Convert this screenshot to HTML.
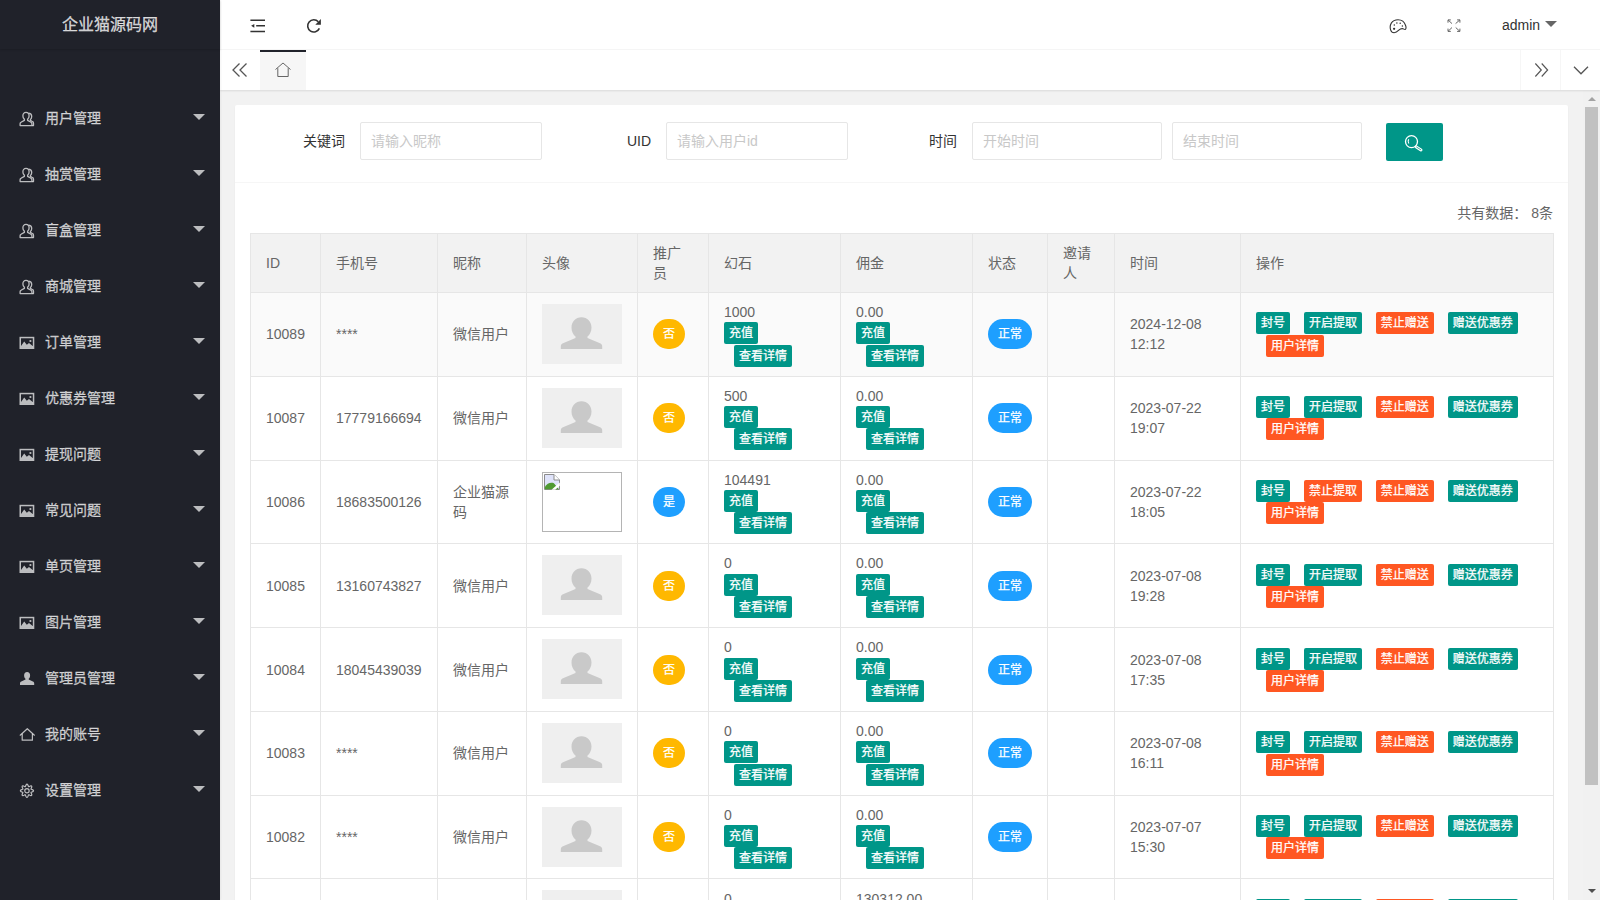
<!DOCTYPE html>
<html lang="zh-CN">
<head>
<meta charset="utf-8">
<title>企业猫源码网</title>
<style>
*{box-sizing:border-box;margin:0;padding:0}
html,body{width:1600px;height:900px;overflow:hidden}
body{font:14px/24px "Liberation Sans","Noto Sans CJK SC",sans-serif;color:#666;background:#f2f2f2;position:relative}
a{color:inherit;text-decoration:none}
ul{list-style:none}
.side{position:absolute;left:0;top:0;width:220px;height:900px;background:#20222A;color:rgba(255,255,255,.7);z-index:5;box-shadow:1px 0 2px 0 rgba(0,0,0,.05)}
.logo{position:absolute;left:0;top:0;width:220px;height:49px;line-height:50px;text-align:center;font-size:16px;color:rgba(255,255,255,.8);box-shadow:0 1px 2px 0 rgba(0,0,0,.15);-webkit-text-stroke:.25px rgba(255,255,255,.8)}
.nav{position:absolute;left:0;top:90px;width:220px}
.nav li{position:relative;height:56px;line-height:56px;padding-left:45px;font-size:14px;-webkit-text-stroke:.3px rgba(255,255,255,.7)}
.nav li .mi{position:absolute;left:19px;top:21px}
.nav li .more{position:absolute;right:15px;top:24px;width:0;height:0;border:6px solid transparent;border-top-color:rgba(255,255,255,.7);border-bottom-width:0}
.header{position:absolute;left:220px;top:0;width:1380px;height:50px;background:#fff;border-bottom:1px solid #f6f6f6;color:#333}
.header .ic{position:absolute}
.header .admin{position:absolute;left:1282px;top:13px;line-height:24px;font-size:14px;color:#333}
.header .tri{position:absolute;left:1325px;top:21px;width:0;height:0;border:6px solid transparent;border-top-color:#666;border-bottom-width:0}
.tabs{position:absolute;left:220px;top:50px;width:1380px;height:40px;background:#fff;box-shadow:0 1px 2px 0 rgba(0,0,0,.1);z-index:3}
.tabs .ctl{position:absolute;top:0;width:40px;height:40px;border-left:1px solid #f6f6f6}
.tabs .hometab{position:absolute;left:40px;top:0;width:46px;height:40px;background:#f6f6f6}
.tabs .hometab:before{content:"";position:absolute;left:0;top:0;width:100%;height:2px;background:#20222A}
.tabs svg{position:absolute}
.body{position:absolute;left:220px;top:90px;width:1380px;height:810px;background:#f2f2f2;overflow:hidden}
.sb{position:absolute;right:0;top:0;width:17px;height:810px;background:#f1f1f1}
.sb .thumb{position:absolute;left:2px;top:17px;width:13px;height:678px;background:#c1c1c1}
.sb .up{position:absolute;left:5px;top:7px;width:0;height:0;border:4px solid transparent;border-bottom:4px solid #a3a3a3;border-top-width:0}
.sb .dn{position:absolute;left:5px;top:799px;width:0;height:0;border:4px solid transparent;border-top:4px solid #505050;border-bottom-width:0}
.card{position:absolute;left:15px;top:15px;width:1333px;height:1000px;background:#fff;border-radius:2px;box-shadow:0 1px 2px 0 rgba(0,0,0,.05)}
.lbl{position:absolute;top:32px;height:38px;line-height:38px;width:110px;padding:0 15px;text-align:right;color:#333;left:0}
.inp{position:absolute;top:17px;height:38px;line-height:36px;border:1px solid #e6e6e6;border-radius:2px;padding-left:10px;color:#c8c8c8;background:#fff;font-size:14px}
.sbtn{position:absolute;left:1151px;top:18px;width:57px;height:38px;background:#009688;border-radius:2px}
.hr{position:absolute;left:0;top:77px;width:1333px;height:1px;background:#f6f6f6}
.count{position:absolute;right:15px;top:96px;line-height:24px;color:#666}
table{position:absolute;left:15px;top:128px;width:1303px;border-collapse:collapse;border-spacing:0;table-layout:fixed;color:#666}
th,td{border:1px solid #e6e6e6;padding:9px 15px;line-height:20px;font-size:14px;text-align:left;font-weight:400;vertical-align:middle;word-break:break-all}
th{background:#f2f2f2}
tbody td{padding-top:8.9px;padding-bottom:8.9px}
tbody tr.hov{background:#fafafa}
.btn{display:inline-block;vertical-align:middle;height:22px;line-height:22px;padding:0 5px;font-size:12px;color:#fff;background:#009688;border-radius:2px;white-space:nowrap;text-align:center;-webkit-text-stroke:.25px #fff}
.btn+.btn{margin-left:10px}
.danger{background:#FF5722}
.rbtn{display:inline-block;vertical-align:middle;height:30px;line-height:30px;padding:0 10px;font-size:12px;color:#fff;border-radius:100px;white-space:nowrap;-webkit-text-stroke:.25px #fff}
.warm{background:#FFB800}
.normal{background:#1E9FFF}
.ava{display:inline-block;width:80px;height:60px;background:#efefef;vertical-align:baseline;position:relative;top:2px}
.ava svg{position:absolute;left:0;top:0}
.broken{display:inline-block;width:80px;height:60px;border:1px solid #b4b4b4;background:#fff;vertical-align:baseline;position:relative;top:3px}
</style>
</head>
<body>
<div class="side"><div class="logo">企业猫源码网</div><ul class="nav"><li><svg class="mi" viewBox="0 0 17 17" width="17" height="17" fill="none" stroke="currentColor" stroke-width="1.3" stroke-linejoin="round"><path d="M7 1.400c1.900 0 3.100 1.500 3.100 3.500 0 1.400-.6 2.600-1.500 3.400v1.100l3.400 1.900c.6.300.9.900.9 1.500v1.800H1.100v-1.800c0-.6.300-1.200.9-1.500l3.400-1.900V8.300C4.500 7.500 3.900 6.300 3.900 4.900c0-2 1.200-3.500 3.100-3.500z"/><path d="M10.100 2.100c1.600.300 2.600 1.700 2.600 3.400 0 1.200-.5 2.300-1.300 3v.9l2.200 1.300c.6.300.9.900.9 1.500v2.400h-1.400"/></svg><span>用户管理</span><i class="more"></i></li><li><svg class="mi" viewBox="0 0 17 17" width="17" height="17" fill="none" stroke="currentColor" stroke-width="1.3" stroke-linejoin="round"><path d="M7 1.400c1.900 0 3.100 1.500 3.100 3.500 0 1.400-.6 2.600-1.500 3.400v1.100l3.400 1.900c.6.300.9.900.9 1.500v1.800H1.100v-1.800c0-.6.300-1.200.9-1.500l3.400-1.900V8.300C4.500 7.500 3.900 6.300 3.900 4.900c0-2 1.200-3.500 3.100-3.500z"/><path d="M10.100 2.100c1.600.300 2.600 1.700 2.600 3.400 0 1.200-.5 2.300-1.300 3v.9l2.200 1.300c.6.300.9.900.9 1.500v2.400h-1.400"/></svg><span>抽赏管理</span><i class="more"></i></li><li><svg class="mi" viewBox="0 0 17 17" width="17" height="17" fill="none" stroke="currentColor" stroke-width="1.3" stroke-linejoin="round"><path d="M7 1.400c1.900 0 3.100 1.500 3.100 3.500 0 1.400-.6 2.600-1.500 3.400v1.100l3.400 1.900c.6.300.9.900.9 1.500v1.800H1.100v-1.800c0-.6.300-1.200.9-1.500l3.400-1.900V8.300C4.500 7.500 3.900 6.300 3.900 4.900c0-2 1.200-3.500 3.100-3.500z"/><path d="M10.100 2.100c1.600.300 2.600 1.700 2.600 3.400 0 1.200-.5 2.300-1.300 3v.9l2.200 1.300c.6.300.9.900.9 1.500v2.400h-1.400"/></svg><span>盲盒管理</span><i class="more"></i></li><li><svg class="mi" viewBox="0 0 17 17" width="17" height="17" fill="none" stroke="currentColor" stroke-width="1.3" stroke-linejoin="round"><path d="M7 1.400c1.900 0 3.100 1.500 3.100 3.500 0 1.400-.6 2.600-1.500 3.400v1.100l3.400 1.900c.6.300.9.900.9 1.500v1.800H1.100v-1.800c0-.6.300-1.200.9-1.500l3.400-1.900V8.300C4.500 7.500 3.900 6.300 3.900 4.900c0-2 1.200-3.500 3.100-3.500z"/><path d="M10.100 2.100c1.600.300 2.600 1.700 2.600 3.400 0 1.200-.5 2.300-1.300 3v.9l2.200 1.300c.6.300.9.900.9 1.500v2.400h-1.400"/></svg><span>商城管理</span><i class="more"></i></li><li><svg class="mi" viewBox="0 0 17 17" width="17" height="17"><rect x="1.250" y="2.550" width="13.300" height="10.700" fill="none" stroke="currentColor" stroke-width="1.500"/><path fill="currentColor" d="M2 12.800v-1.900l3.200-4.400 2.600 3.300 2.200-1.900 4 3.400v1.500z"/><circle cx="11.400" cy="6" r="1.100" fill="currentColor"/></svg><span>订单管理</span><i class="more"></i></li><li><svg class="mi" viewBox="0 0 17 17" width="17" height="17"><rect x="1.250" y="2.550" width="13.300" height="10.700" fill="none" stroke="currentColor" stroke-width="1.500"/><path fill="currentColor" d="M2 12.800v-1.900l3.200-4.400 2.600 3.300 2.200-1.900 4 3.400v1.500z"/><circle cx="11.400" cy="6" r="1.100" fill="currentColor"/></svg><span>优惠券管理</span><i class="more"></i></li><li><svg class="mi" viewBox="0 0 17 17" width="17" height="17"><rect x="1.250" y="2.550" width="13.300" height="10.700" fill="none" stroke="currentColor" stroke-width="1.500"/><path fill="currentColor" d="M2 12.800v-1.900l3.200-4.400 2.600 3.300 2.200-1.900 4 3.400v1.500z"/><circle cx="11.400" cy="6" r="1.100" fill="currentColor"/></svg><span>提现问题</span><i class="more"></i></li><li><svg class="mi" viewBox="0 0 17 17" width="17" height="17"><rect x="1.250" y="2.550" width="13.300" height="10.700" fill="none" stroke="currentColor" stroke-width="1.500"/><path fill="currentColor" d="M2 12.800v-1.900l3.200-4.400 2.600 3.300 2.200-1.900 4 3.400v1.500z"/><circle cx="11.400" cy="6" r="1.100" fill="currentColor"/></svg><span>常见问题</span><i class="more"></i></li><li><svg class="mi" viewBox="0 0 17 17" width="17" height="17"><rect x="1.250" y="2.550" width="13.300" height="10.700" fill="none" stroke="currentColor" stroke-width="1.500"/><path fill="currentColor" d="M2 12.800v-1.900l3.200-4.400 2.600 3.300 2.200-1.900 4 3.400v1.500z"/><circle cx="11.400" cy="6" r="1.100" fill="currentColor"/></svg><span>单页管理</span><i class="more"></i></li><li><svg class="mi" viewBox="0 0 17 17" width="17" height="17"><rect x="1.250" y="2.550" width="13.300" height="10.700" fill="none" stroke="currentColor" stroke-width="1.500"/><path fill="currentColor" d="M2 12.800v-1.900l3.200-4.400 2.600 3.300 2.200-1.900 4 3.400v1.500z"/><circle cx="11.400" cy="6" r="1.100" fill="currentColor"/></svg><span>图片管理</span><i class="more"></i></li><li><svg class="mi" viewBox="0 0 17 17" width="17" height="17"><path fill="currentColor" d="M8.100 1c1.900 0 3 1.500 3 3.400 0 1.400-.6 2.600-1.400 3.300v.9l4.200 1.900c.8.400 1.300 1.100 1.300 1.900V14H1v-1.600c0-.8.500-1.500 1.300-1.900l4.200-1.900v-.9C5.700 7 5.100 5.800 5.100 4.400c0-1.900 1.100-3.400 3-3.400z"/></svg><span>管理员管理</span><i class="more"></i></li><li><svg class="mi" viewBox="0 0 17 17" width="17" height="17" fill="none" stroke="currentColor" stroke-width="1.200" stroke-linejoin="round" stroke-linecap="round"><path d="M1.200 8.200l7.100-6.500 7.100 6.500"/><path d="M3.200 7v6.200h10.200V7"/></svg><span>我的账号</span><i class="more"></i></li><li><svg class="mi" viewBox="0 0 17 17" width="17" height="17" fill="none" stroke="currentColor" stroke-width="1.200"><circle cx="7.950" cy="7.750" r="2.200"/><path stroke-linejoin="round" d="M14.50 7.75L14.40 8.09L14.12 8.40L13.70 8.66L13.22 8.87L12.76 9.04L12.37 9.19L12.13 9.35L12.04 9.57L12.09 9.86L12.26 10.24L12.47 10.69L12.66 11.17L12.77 11.65L12.75 12.07L12.58 12.38L12.27 12.55L11.85 12.57L11.37 12.46L10.89 12.27L10.44 12.06L10.06 11.89L9.77 11.84L9.55 11.93L9.39 12.17L9.24 12.56L9.07 13.02L8.86 13.50L8.60 13.92L8.29 14.20L7.95 14.30L7.61 14.20L7.30 13.92L7.04 13.50L6.83 13.02L6.66 12.56L6.51 12.17L6.35 11.93L6.13 11.84L5.84 11.89L5.46 12.06L5.01 12.27L4.53 12.46L4.05 12.57L3.63 12.55L3.32 12.38L3.15 12.07L3.13 11.65L3.24 11.17L3.43 10.69L3.64 10.24L3.81 9.86L3.86 9.57L3.77 9.35L3.53 9.19L3.14 9.04L2.68 8.87L2.20 8.66L1.78 8.40L1.50 8.09L1.40 7.75L1.50 7.41L1.78 7.10L2.20 6.84L2.68 6.63L3.14 6.46L3.53 6.31L3.77 6.15L3.86 5.93L3.81 5.64L3.64 5.26L3.43 4.81L3.24 4.33L3.13 3.85L3.15 3.43L3.32 3.12L3.63 2.95L4.05 2.93L4.53 3.04L5.01 3.23L5.46 3.44L5.84 3.61L6.13 3.66L6.35 3.57L6.51 3.33L6.66 2.94L6.83 2.48L7.04 2.00L7.30 1.58L7.61 1.30L7.95 1.20L8.29 1.30L8.60 1.58L8.86 2.00L9.07 2.48L9.24 2.94L9.39 3.33L9.55 3.57L9.77 3.66L10.06 3.61L10.44 3.44L10.89 3.23L11.37 3.04L11.85 2.93L12.27 2.95L12.58 3.12L12.75 3.43L12.77 3.85L12.66 4.33L12.47 4.81L12.26 5.26L12.09 5.64L12.04 5.93L12.13 6.15L12.37 6.31L12.76 6.46L13.22 6.63L13.70 6.84L14.12 7.10L14.40 7.41z"/></svg><span>设置管理</span><i class="more"></i></li></ul></div>
<div class="header">
<svg class="ic" style="left:30px;top:18px" width="16" height="16" viewBox="0 0 16 16" fill="none" stroke="#333" stroke-width="1.400"><path d="M0.400 2.200H15M6.200 7.800H15M0.400 13.500H15"/><path d="M4.300 6v3.700L1.100 7.850z" fill="#333" stroke="none"/></svg>
<svg class="ic" style="left:86px;top:18px" width="16" height="16" viewBox="0 0 16 16" fill="none" stroke="#333" stroke-width="1.600"><path d="M12.330 3.820A6.100 6.100 0 1 0 13.370 10.380"/><path d="M9.300 6.700L14.900 1.100V6.700z" fill="#333" stroke="none"/></svg>
<svg class="ic" style="left:1169px;top:19px" width="18" height="15" viewBox="0 0 18 15" fill="none" stroke="#333" stroke-width="1.100"><path d="M9 .7C12.500 .7 15.500 3 16.600 6.500C17.200 8.300 17 9.900 16.300 10.400C15.500 10.800 14.600 9.600 13.200 9.600C11.800 9.600 10.800 10.200 9.800 11.200C8.500 12.500 7 13.700 5.100 13.700C3.400 13.700 2.200 12.600 1.600 10.800C.9 8.600 1.100 6.100 2.300 4.100C3.700 1.900 6.200 .7 9 .7z"/><circle cx="5.100" cy="9.800" r="1.150" fill="#333" stroke="none"/><circle cx="5.300" cy="5.900" r=".75" fill="#333" stroke="none"/><circle cx="7.900" cy="3.900" r=".75" fill="#333" stroke="none"/><circle cx="11.200" cy="4.200" r=".75" fill="#333" stroke="none"/><circle cx="13.400" cy="7" r=".75" fill="#333" stroke="none"/></svg>
<svg class="ic" style="left:1227px;top:19px" width="14" height="14" viewBox="0 0 14 14" fill="none" stroke="#666" stroke-width="1"><path d="M1 3.700V.9h2.800M1 .9l4 3.700M10.100 .9h2.800v2.800M12.900 .9l-4.300 3.700M1 9.600v2.800h2.800M1 12.400l4-3.900M12.900 9.600v2.800h-2.800M12.900 12.400l-4.200-3.900"/></svg>
<span class="admin">admin</span><i class="tri"></i>
</div>
<div class="tabs">
<svg style="left:12px;top:13px" width="16" height="14" viewBox="0 0 16 14" fill="none" stroke="#555" stroke-width="1.300"><path d="M7.500 0.500L1 7l6.500 6.500M14.500 0.500L8 7l6.500 6.500"/></svg>
<div class="hometab"><svg style="left:15px;top:12px" width="16" height="16" viewBox="0 0 16 16" fill="none" stroke="#666" stroke-width="1" stroke-linejoin="round"><path d="M0.500 7.500L8 1l7.500 6.500"/><path d="M2.800 6.200v8.300h10.400V6.200"/></svg></div>
<div class="ctl" style="left:1300px"><svg style="left:13px;top:13px" width="14.500" height="14" viewBox="0 0 16 14" preserveAspectRatio="none" fill="none" stroke="#555" stroke-width="1.300"><path d="M1.500 0.500L8 7l-6.500 6.500M8.500 0.500L15 7l-6.500 6.500"/></svg></div>
<div class="ctl" style="left:1340px"><svg style="left:12px;top:16px" width="16" height="9" viewBox="0 0 16 9" fill="none" stroke="#555" stroke-width="1.300"><path d="M1 0.800l7 7 7-7"/></svg></div>
</div>
<div class="body"><div class="card">
<div class="lbl" style="left:15px;top:17px">关键词</div><div class="inp" style="left:125px;width:182px">请输入昵称</div><div class="lbl" style="left:321px;top:17px">UID</div><div class="inp" style="left:431px;width:182px">请输入用户id</div><div class="lbl" style="left:627px;top:17px">时间</div><div class="inp" style="left:737px;width:190px">开始时间</div><div class="inp" style="left:937px;width:190px">结束时间</div><div class="sbtn"><svg style="position:absolute;left:18px;top:11px" width="20" height="20" viewBox="0 0 20 20" fill="none" stroke="#fff" stroke-width="1.300"><circle cx="7.500" cy="7.600" r="6"/><path d="M4.700 5.200a4 4 0 0 0 .1 4.300" stroke-width="1.200"/><path d="M12.300 12.900l4.700 3" stroke-width="3" stroke-linecap="round"/><path d="M12.600 13.100l4.200 2.700" stroke="#009688" stroke-width=".8" stroke-linecap="round"/></svg></div><div class="hr"></div><div class="count">共有数据： 8条</div>
<table><colgroup><col style="width:70px"><col style="width:117px"><col style="width:89px"><col style="width:111px"><col style="width:71px"><col style="width:132px"><col style="width:132px"><col style="width:75px"><col style="width:67px"><col style="width:126px"><col style="width:313px"></colgroup><thead><tr><th>ID</th><th>手机号</th><th>昵称</th><th>头像</th><th>推广员</th><th>幻石</th><th>佣金</th><th>状态</th><th>邀请人</th><th>时间</th><th>操作</th></tr></thead><tbody>
<tr class="hov"><td>10089</td><td>****</td><td>微信用户</td><td><span class="ava"><svg width="80" height="60" viewBox="0 0 80 60"><path fill="#c9c9c9" d="M39.500 13.300c5.800 0 10 4.500 10 10.400 0 3.800-1.700 6.900-4 8.900v1.500l12.500 5.200c1.500.6 2.200 1.700 2.200 3.100v2.600H18.800v-2.600c0-1.400.7-2.500 2.200-3.100l12.500-5.200v-1.500c-2.300-2-4-5.100-4-8.900 0-5.900 4.200-10.400 10-10.400z"/></svg></span></td><td><span class="rbtn warm">否</span></td><td>1000<br><span class="btn">充值</span> <span class="btn">查看详情</span></td><td>0.00<br><span class="btn">充值</span> <span class="btn">查看详情</span></td><td><span class="rbtn normal">正常</span></td><td></td><td>2024-12-08<br>12:12</td><td><span class="btn">封号</span> <span class="btn">开启提取</span> <span class="btn danger">禁止赠送</span> <span class="btn">赠送优惠券</span> <span class="btn danger">用户详情</span></td></tr>
<tr><td>10087</td><td>17779166694</td><td>微信用户</td><td><span class="ava"><svg width="80" height="60" viewBox="0 0 80 60"><path fill="#c9c9c9" d="M39.500 13.300c5.800 0 10 4.500 10 10.400 0 3.800-1.700 6.900-4 8.900v1.500l12.500 5.200c1.500.6 2.200 1.700 2.200 3.100v2.600H18.800v-2.600c0-1.400.7-2.500 2.200-3.100l12.500-5.200v-1.500c-2.300-2-4-5.100-4-8.900 0-5.900 4.200-10.400 10-10.400z"/></svg></span></td><td><span class="rbtn warm">否</span></td><td>500<br><span class="btn">充值</span> <span class="btn">查看详情</span></td><td>0.00<br><span class="btn">充值</span> <span class="btn">查看详情</span></td><td><span class="rbtn normal">正常</span></td><td></td><td>2023-07-22<br>19:07</td><td><span class="btn">封号</span> <span class="btn">开启提取</span> <span class="btn danger">禁止赠送</span> <span class="btn">赠送优惠券</span> <span class="btn danger">用户详情</span></td></tr>
<tr><td>10086</td><td>18683500126</td><td>企业猫源码</td><td><span class="broken"><svg style="position:absolute;left:1px;top:1px" width="16" height="16" viewBox="0 0 16 16"><path d="M.5 .5h9.500l5.500 5.500v9.500H.5z" fill="#dfe3fa" stroke="#8c8c8c" stroke-width="1"/><path d="M.9 15.200V13c2-3.500 5.500-5 9-3.800L15 15.200z" fill="#4f9a32"/><path d="M7.500 15.800L15.800 8.600v3.200l-4.600 4z" fill="#fff"/><path d="M10 .5v5.500h5.500" fill="#fff" stroke="#8c8c8c" stroke-width="1"/></svg></span></td><td><span class="rbtn normal">是</span></td><td>104491<br><span class="btn">充值</span> <span class="btn">查看详情</span></td><td>0.00<br><span class="btn">充值</span> <span class="btn">查看详情</span></td><td><span class="rbtn normal">正常</span></td><td></td><td>2023-07-22<br>18:05</td><td><span class="btn">封号</span> <span class="btn danger">禁止提取</span> <span class="btn danger">禁止赠送</span> <span class="btn">赠送优惠券</span> <span class="btn danger">用户详情</span></td></tr>
<tr><td>10085</td><td>13160743827</td><td>微信用户</td><td><span class="ava"><svg width="80" height="60" viewBox="0 0 80 60"><path fill="#c9c9c9" d="M39.500 13.300c5.800 0 10 4.500 10 10.400 0 3.800-1.700 6.900-4 8.900v1.500l12.500 5.200c1.500.6 2.200 1.700 2.200 3.100v2.600H18.800v-2.600c0-1.400.7-2.500 2.200-3.100l12.500-5.200v-1.500c-2.300-2-4-5.100-4-8.900 0-5.900 4.200-10.400 10-10.400z"/></svg></span></td><td><span class="rbtn warm">否</span></td><td>0<br><span class="btn">充值</span> <span class="btn">查看详情</span></td><td>0.00<br><span class="btn">充值</span> <span class="btn">查看详情</span></td><td><span class="rbtn normal">正常</span></td><td></td><td>2023-07-08<br>19:28</td><td><span class="btn">封号</span> <span class="btn">开启提取</span> <span class="btn danger">禁止赠送</span> <span class="btn">赠送优惠券</span> <span class="btn danger">用户详情</span></td></tr>
<tr><td>10084</td><td>18045439039</td><td>微信用户</td><td><span class="ava"><svg width="80" height="60" viewBox="0 0 80 60"><path fill="#c9c9c9" d="M39.500 13.300c5.800 0 10 4.500 10 10.400 0 3.800-1.700 6.900-4 8.900v1.500l12.500 5.200c1.500.6 2.200 1.700 2.200 3.100v2.600H18.800v-2.600c0-1.400.7-2.500 2.200-3.100l12.500-5.200v-1.500c-2.300-2-4-5.100-4-8.900 0-5.900 4.200-10.400 10-10.400z"/></svg></span></td><td><span class="rbtn warm">否</span></td><td>0<br><span class="btn">充值</span> <span class="btn">查看详情</span></td><td>0.00<br><span class="btn">充值</span> <span class="btn">查看详情</span></td><td><span class="rbtn normal">正常</span></td><td></td><td>2023-07-08<br>17:35</td><td><span class="btn">封号</span> <span class="btn">开启提取</span> <span class="btn danger">禁止赠送</span> <span class="btn">赠送优惠券</span> <span class="btn danger">用户详情</span></td></tr>
<tr><td>10083</td><td>****</td><td>微信用户</td><td><span class="ava"><svg width="80" height="60" viewBox="0 0 80 60"><path fill="#c9c9c9" d="M39.500 13.300c5.800 0 10 4.500 10 10.400 0 3.800-1.700 6.900-4 8.900v1.500l12.500 5.200c1.500.6 2.200 1.700 2.200 3.100v2.600H18.800v-2.600c0-1.400.7-2.500 2.200-3.100l12.500-5.200v-1.500c-2.300-2-4-5.100-4-8.900 0-5.900 4.200-10.400 10-10.400z"/></svg></span></td><td><span class="rbtn warm">否</span></td><td>0<br><span class="btn">充值</span> <span class="btn">查看详情</span></td><td>0.00<br><span class="btn">充值</span> <span class="btn">查看详情</span></td><td><span class="rbtn normal">正常</span></td><td></td><td>2023-07-08<br>16:11</td><td><span class="btn">封号</span> <span class="btn">开启提取</span> <span class="btn danger">禁止赠送</span> <span class="btn">赠送优惠券</span> <span class="btn danger">用户详情</span></td></tr>
<tr><td>10082</td><td>****</td><td>微信用户</td><td><span class="ava"><svg width="80" height="60" viewBox="0 0 80 60"><path fill="#c9c9c9" d="M39.500 13.300c5.800 0 10 4.500 10 10.400 0 3.800-1.700 6.900-4 8.900v1.500l12.500 5.200c1.500.6 2.200 1.700 2.200 3.100v2.600H18.800v-2.600c0-1.400.7-2.500 2.200-3.100l12.500-5.200v-1.500c-2.300-2-4-5.100-4-8.900 0-5.900 4.200-10.400 10-10.400z"/></svg></span></td><td><span class="rbtn warm">否</span></td><td>0<br><span class="btn">充值</span> <span class="btn">查看详情</span></td><td>0.00<br><span class="btn">充值</span> <span class="btn">查看详情</span></td><td><span class="rbtn normal">正常</span></td><td></td><td>2023-07-07<br>15:30</td><td><span class="btn">封号</span> <span class="btn">开启提取</span> <span class="btn danger">禁止赠送</span> <span class="btn">赠送优惠券</span> <span class="btn danger">用户详情</span></td></tr>
<tr><td>10081</td><td>****</td><td>微信用户</td><td><span class="ava"><svg width="80" height="60" viewBox="0 0 80 60"><path fill="#c9c9c9" d="M39.500 13.300c5.800 0 10 4.500 10 10.400 0 3.800-1.700 6.900-4 8.900v1.500l12.500 5.200c1.500.6 2.200 1.700 2.200 3.100v2.600H18.800v-2.600c0-1.400.7-2.500 2.200-3.100l12.500-5.200v-1.500c-2.300-2-4-5.100-4-8.900 0-5.900 4.200-10.400 10-10.400z"/></svg></span></td><td><span class="rbtn warm">否</span></td><td>0<br><span class="btn">充值</span> <span class="btn">查看详情</span></td><td>130312.00<br><span class="btn">充值</span> <span class="btn">查看详情</span></td><td><span class="rbtn normal">正常</span></td><td></td><td>2023-07-07<br>15:02</td><td><span class="btn">封号</span> <span class="btn">开启提取</span> <span class="btn danger">禁止赠送</span> <span class="btn">赠送优惠券</span> <span class="btn danger">用户详情</span></td></tr>
</tbody></table>
</div><div class="sb"><i class="up"></i><div class="thumb"></div><i class="dn"></i></div></div>
</body></html>
